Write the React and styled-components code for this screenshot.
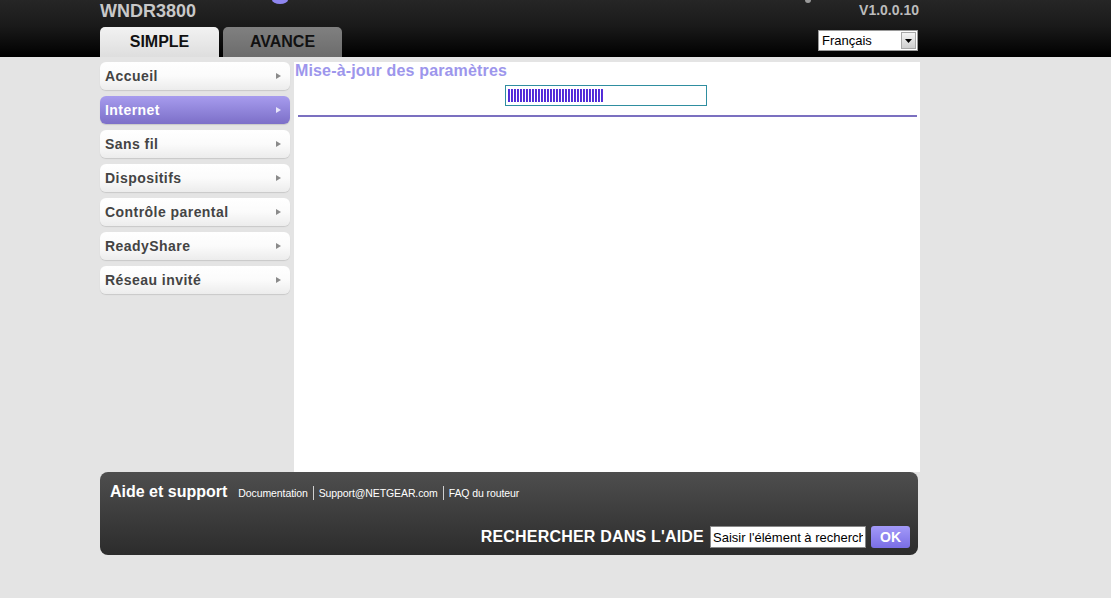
import styled, { createGlobalStyle } from "styled-components";

const GlobalStyle = createGlobalStyle`
  html, body {
    margin: 0;
    padding: 0;
    background: #e4e4e4;
    font-family: "Liberation Sans", Arial, sans-serif;
  }
`;

const navItems = [
  "Accueil",
  "Internet",
  "Sans fil",
  "Dispositifs",
  "Contrôle parental",
  "ReadyShare",
  "Réseau invité",
];

const App = () => {
  return (
    <>
      <GlobalStyle />
      <Header>
        <HeaderInner>
          <Logo width="18" height="5" viewBox="0 0 18 5">
            <ellipse cx="9" cy="0" rx="8" ry="4" fill="#8f86f0" />
          </Logo>
          <Genie />
          <HeaderLeft>
            <Model>WNDR3800</Model>
            <Tabs>
              <Tab $active>SIMPLE</Tab>
              <Tab>AVANCE</Tab>
            </Tabs>
          </HeaderLeft>
          <HeaderRight>
            <Version>V1.0.0.10</Version>
            <LangSelect>
              <span>Français</span>
              <SelectButton>
                <svg width="7" height="4" viewBox="0 0 7 4">
                  <path d="M0 0h7L3.5 4z" fill="#000" />
                </svg>
              </SelectButton>
            </LangSelect>
          </HeaderRight>
        </HeaderInner>
      </Header>

      <Main>
        <Nav>
          {navItems.map((item) => (
            <NavItem key={item} $active={item === "Internet"}>
              {item}
              <Arrow $active={item === "Internet"} />
            </NavItem>
          ))}
        </Nav>
        <Panel>
          <PanelTitle>Mise-à-jour des paramètres</PanelTitle>
          <ProgressBox>
            <ProgressFill />
          </ProgressBox>
          <Divider />
        </Panel>
      </Main>

      <Footer>
        <FooterTop>
          <FooterTitle>Aide et support</FooterTitle>
          <FooterLink>Documentation</FooterLink>
          <FooterLink $sep>Support@NETGEAR.com</FooterLink>
          <FooterLink $sep>FAQ du routeur</FooterLink>
        </FooterTop>
        <FooterSearch>
          <SearchLabel>RECHERCHER DANS L'AIDE</SearchLabel>
          <SearchInput defaultValue="Saisir l'élément à rechercher" />
          <OkButton>OK</OkButton>
        </FooterSearch>
      </Footer>
    </>
  );
};

const Header = styled.div`
  width: 100%;
  height: 57px;
  background: linear-gradient(#262626 0%, #1a1a1a 45%, #000 100%);
`;

const HeaderInner = styled.div`
  position: relative;
  width: 820px;
  height: 100%;
  margin-left: 100px;
  display: flex;
  justify-content: space-between;
`;

const Logo = styled.svg`
  position: absolute;
  left: 171px;
  top: 0;
`;

const Genie = styled.div`
  position: absolute;
  left: 705px;
  top: 0;
  width: 6px;
  height: 3px;
  background: #9a9a9a;
  border-radius: 0 0 3px 3px;
`;

const HeaderLeft = styled.div`
  display: flex;
  flex-direction: column;
  justify-content: space-between;
`;

const Model = styled.div`
  color: #c8c8c8;
  font-size: 18px;
  font-weight: bold;
  line-height: 20px;
  padding-top: 1px;
`;

const Tabs = styled.div`
  display: flex;
  gap: 4px;
`;

const Tab = styled.div`
  width: 119px;
  height: 30px;
  border-radius: 5px 5px 0 0;
  display: flex;
  align-items: center;
  justify-content: center;
  font-size: 16px;
  font-weight: bold;
  color: #111;
  background: ${(p) =>
    p.$active
      ? "linear-gradient(#f2f2f2, #dedede)"
      : "linear-gradient(#808080, #6c6c6c)"};
`;

const HeaderRight = styled.div`
  display: flex;
  flex-direction: column;
  align-items: flex-end;
`;

const Version = styled.div`
  color: #bcbcbc;
  font-size: 14px;
  font-weight: bold;
  line-height: 16px;
  margin-top: 2px;
  margin-right: 1px;
`;

const LangSelect = styled.div`
  margin-top: 12px;
  width: 100px;
  height: 21px;
  box-sizing: border-box;
  background: #fff;
  border: 1px solid #9a9a9a;
  display: flex;
  align-items: center;
  justify-content: space-between;
  font-size: 13px;
  color: #000;
  padding-left: 3px;
  margin-right: 2px;
`;

const SelectButton = styled.div`
  width: 15px;
  height: 17px;
  margin-right: 1px;
  box-sizing: border-box;
  border: 1px solid #a8a8a8;
  background: linear-gradient(#f4f4f4, #cfcfcf);
  display: flex;
  align-items: center;
  justify-content: center;
`;

const Main = styled.div`
  display: flex;
  width: 820px;
  margin: 5px 0 0 100px;
  gap: 4px;
`;

const Nav = styled.div`
  width: 190px;
  display: flex;
  flex-direction: column;
  gap: 6px;
`;

const NavItem = styled.div`
  position: relative;
  height: 28px;
  box-sizing: border-box;
  border-radius: 6px;
  padding-left: 5px;
  display: flex;
  align-items: center;
  font-size: 14px;
  font-weight: bold;
  letter-spacing: 0.45px;
  color: ${(p) => (p.$active ? "#fff" : "#444")};
  background: ${(p) =>
    p.$active
      ? "linear-gradient(#a79cee, #7c6fc8)"
      : "linear-gradient(#ffffff 0%, #fbfbfb 50%, #ececec 100%)"};
  box-shadow: 0 1px 1px rgba(0, 0, 0, 0.12);
`;

const Arrow = styled.span`
  position: absolute;
  right: 9px;
  top: 11px;
  width: 0;
  height: 0;
  border-top: 3px solid transparent;
  border-bottom: 3px solid transparent;
  border-left: 5px solid ${(p) => (p.$active ? "#e8e6fa" : "#8a8a8a")};
`;

const Panel = styled.div`
  width: 626px;
  height: 410px;
  background: #fff;
  display: flex;
  flex-direction: column;
  align-items: center;
  padding: 0 3px 0 4px;
  box-sizing: border-box;
`;

const PanelTitle = styled.div`
  align-self: flex-start;
  margin-left: -3px;
  color: #9d96ec;
  font-size: 16px;
  font-weight: bold;
  letter-spacing: 0.15px;
  line-height: 18px;
  margin-top: 0;
`;

const ProgressBox = styled.div`
  width: 202px;
  height: 21px;
  box-sizing: border-box;
  border: 1px solid #2f8ea0;
  margin-top: 5px;
  margin-right: 4px;
  padding: 3px 2px;
`;

const ProgressFill = styled.div`
  width: 96px;
  height: 100%;
  background: repeating-linear-gradient(
    90deg,
    #3c2ee0 0px,
    #6a2ed0 2px,
    #ffffff 2px,
    #ffffff 3px
  );
`;

const Divider = styled.div`
  width: 100%;
  height: 2px;
  background: #7b70c0;
  margin-top: 9px;
`;

const Footer = styled.div`
  width: 818px;
  height: 83px;
  margin-left: 100px;
  box-sizing: border-box;
  border-radius: 8px;
  background: linear-gradient(#4e4e4e, #2c2c2c);
  padding: 11px 8px 7px 10px;
  display: flex;
  flex-direction: column;
  justify-content: space-between;
`;

const FooterTop = styled.div`
  display: flex;
  align-items: baseline;
`;

const FooterTitle = styled.div`
  color: #fff;
  font-size: 16px;
  font-weight: bold;
  margin-right: 11px;
`;

const FooterLink = styled.span`
  color: #fff;
  font-size: 10.5px;
  letter-spacing: -0.1px;
  line-height: 14px;
  padding-right: 5px;
  border-left: ${(p) => (p.$sep ? "1px solid #cfcfcf" : "none")};
  padding-left: ${(p) => (p.$sep ? "5px" : "0")};
`;

const FooterSearch = styled.div`
  display: flex;
  justify-content: flex-end;
  align-items: center;
  gap: 5px;
`;

const SearchLabel = styled.div`
  color: #fff;
  font-size: 16px;
  font-weight: bold;
  letter-spacing: 0.2px;
  margin-right: 1px;
`;

const SearchInput = styled.input`
  width: 156px;
  height: 22px;
  box-sizing: border-box;
  border: 1px solid #888;
  padding: 0 2px;
  font-family: "Liberation Sans", Arial, sans-serif;
  font-size: 13px;
  color: #000;
  outline: none;
`;

const OkButton = styled.div`
  width: 39px;
  height: 22px;
  border-radius: 3px;
  background: linear-gradient(#a39af8, #7a6ee6);
  color: #fff;
  font-size: 14px;
  font-weight: bold;
  display: flex;
  align-items: center;
  justify-content: center;
`;

export default App;
